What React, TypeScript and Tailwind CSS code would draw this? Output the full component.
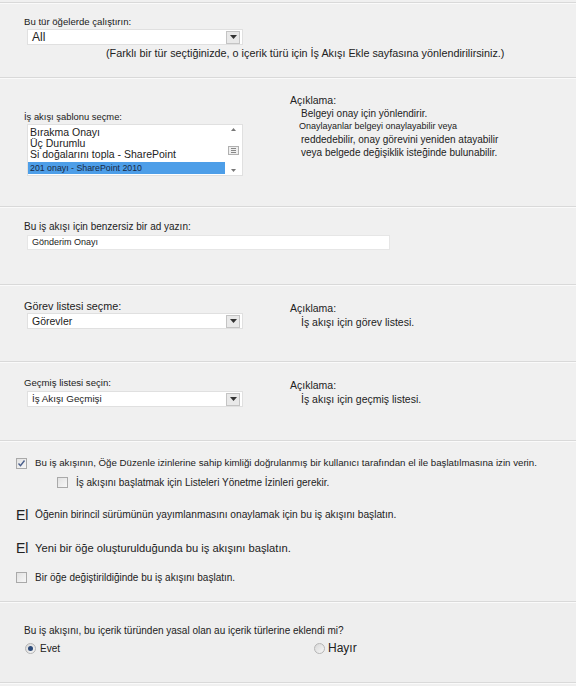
import React from "react";

const font = { fontFamily: '"Liberation Sans", Arial, sans-serif' };

function Separator() {
  return (
    <div>
      <div className="h-px bg-[#d9d9d9]" />
      <div className="h-px bg-[#fafafa]" />
    </div>
  );
}

function Arrow() {
  return (
    <div className="ml-auto mr-[2px] w-[14px] h-[13px] bg-[#e9e9e9] border border-[#c4c4c4] flex items-center justify-center">
      <svg width="7" height="4" viewBox="0 0 7 4">
        <path d="M0 0h7L3.5 4z" fill="#333" />
      </svg>
    </div>
  );
}

function Select({ value, size = "text-[12px]" }: { value: string; size?: string }) {
  return (
    <div className="w-[216px] h-[16px] bg-white border border-[#e0e0e0] flex items-center">
      <span className={`pl-[4px] ${size} leading-[14px] text-[#222]`}>{value}</span>
      <Arrow />
    </div>
  );
}

function Checkbox({ checked = false }: { checked?: boolean }) {
  return (
    <div className="w-[11px] h-[11px] border border-[#a9a9a9] bg-gradient-to-br from-[#e2e2e2] to-[#f7f7f7] flex items-center justify-center shrink-0">
      {checked && (
        <svg width="9" height="9" viewBox="0 0 9 9">
          <path d="M1.5 4.5l2 2.2L7.5 1.5" stroke="#4a5f8c" strokeWidth="1.4" fill="none" />
        </svg>
      )}
    </div>
  );
}

function Radio({ checked = false }: { checked?: boolean }) {
  return (
    <div className="w-[11px] h-[11px] rounded-full border border-[#b5b5b5] bg-gradient-to-br from-[#d8d8d8] to-[#f7f7f7] flex items-center justify-center shrink-0">
      {checked && <div className="w-[5px] h-[5px] rounded-full bg-[#2c4a7a]" />}
    </div>
  );
}

export default function App() {
  return (
    <div className="w-[576px] h-[686px] bg-[#f0f0f0] text-[#222] overflow-hidden" style={font}>
      <div className="h-[2px]" />
      <Separator />

      {/* content type */}
      <div className="h-[73px] pt-[12px] pl-[24px]">
        <div className="text-[9.6px] leading-[12px]">Bu tür öğelerde çalıştırın:</div>
        <div className="pl-[3px] mt-px">
          <Select value="All" />
        </div>
        <div className="pl-[82px] mt-[2px] text-[10.8px] leading-[12px] whitespace-nowrap">
          (Farklı bir tür seçtiğinizde, o içerik türü için İş Akışı Ekle sayfasına yönlendirilirsiniz.)
        </div>
      </div>
      <Separator />

      {/* template */}
      <div className="h-[127px] flex pl-[24px]">
        <div className="w-[266px] pt-[32px]">
          <div className="text-[9.4px] leading-[12px]">İş akışı şablonu seçme:</div>
          <div className="ml-[3px] mt-px w-[216px] h-[52px] bg-white border border-[#e0e0e0] flex">
            <div className="flex-1 pt-[2px] pl-[2px]">
              <div className="text-[10.5px] leading-[11px] h-[11px]">Bırakma Onayı</div>
              <div className="text-[10.5px] leading-[11px] h-[11px]">Üç Durumlu</div>
              <div className="text-[10.5px] leading-[11px] h-[11px]">Si doğalarını topla - SharePoint</div>
              <div className="-ml-[2px] mt-[2px] h-[12px] bg-[#4d9ee8] text-[8.8px] leading-[12px] pl-[2px] text-[#1a2a44]">
                201 onayı - SharePoint 2010
              </div>
            </div>
            <div className="w-[17px] flex flex-col items-center justify-between py-[3px]">
              <svg width="5" height="3" viewBox="0 0 5 3"><path d="M0 3h5L2.5 0z" fill="#777" /></svg>
              <div className="w-[11px] h-[9px] border border-[#b0b0b0] bg-[#efefef] flex flex-col justify-center items-center gap-px">
                <div className="w-[5px] h-px bg-[#888]" />
                <div className="w-[5px] h-px bg-[#888]" />
                <div className="w-[5px] h-px bg-[#888]" />
              </div>
              <svg width="5" height="3" viewBox="0 0 5 3"><path d="M0 0h5L2.5 3z" fill="#777" /></svg>
            </div>
          </div>
        </div>
        <div className="pt-[15px] text-[10px] leading-[13px]">
          <div className="text-[10.5px]">Açıklama:</div>
          <div className="pl-[11px]">
            <div>Belgeyi onay için yönlendirir.</div>
            <div className="-ml-[2px] text-[9px]">Onaylayanlar belgeyi onaylayabilir veya</div>
            <div>reddedebilir, onay görevini yeniden atayabilir</div>
            <div>veya belgede değişiklik isteğinde bulunabilir.</div>
          </div>
        </div>
      </div>
      <Separator />

      {/* name */}
      <div className="h-[76px] pt-[13px] pl-[24px]">
        <div className="text-[10px] leading-[12px]">Bu iş akışı için benzersiz bir ad yazın:</div>
        <div className="ml-[3px] mt-[2px] w-[363px] h-[15px] bg-white border border-[#e6e6e6] flex items-center">
          <span className="pl-[4px] text-[9px]">Gönderim Onayı</span>
        </div>
      </div>
      <Separator />

      {/* task list */}
      <div className="h-[75px] flex pl-[24px]">
        <div className="w-[266px] pt-[13px]">
          <div className="text-[10.8px] leading-[14px]">Görev listesi seçme:</div>
          <div className="pl-[3px]">
            <Select value="Görevler" size="text-[10.5px]" />
          </div>
        </div>
        <div className="pt-[15px] text-[10.5px] leading-[14px]">
          <div>Açıklama:</div>
          <div className="pl-[11px]">İş akışı için görev listesi.</div>
        </div>
      </div>
      <Separator />

      {/* history list */}
      <div className="h-[77px] flex pl-[24px]">
        <div className="w-[266px] pt-[14px]">
          <div className="text-[9.6px] leading-[12px]">Geçmiş listesi seçin:</div>
          <div className="pl-[3px] mt-[2px]">
            <Select value="İş Akışı Geçmişi" size="text-[9.8px]" />
          </div>
        </div>
        <div className="pt-[15px] text-[10.5px] leading-[14px]">
          <div>Açıklama:</div>
          <div className="pl-[11px]">İş akışı için geçmiş listesi.</div>
        </div>
      </div>
      <Separator />

      {/* start options */}
      <div className="h-[159px] pl-[16px] pt-[15px]">
        <div className="flex items-center gap-[8px] h-[12px]">
          <Checkbox checked />
          <span className="text-[9.7px] whitespace-nowrap">
            Bu iş akışının, Öğe Düzenle izinlerine sahip kimliği doğrulanmış bir kullanıcı tarafından el ile başlatılmasına izin verin.
          </span>
        </div>
        <div className="flex items-center gap-[8px] h-[12px] mt-[7px] pl-[41px]">
          <Checkbox />
          <span className="text-[10px]">İş akışını başlatmak için Listeleri Yönetme İzinleri gerekir.</span>
        </div>
        <div className="flex items-center h-[16px] mt-[19px]">
          <span className="w-[19px] text-[14px] leading-[16px]">El</span>
          <span className="text-[10.2px]">Öğenin birincil sürümünün yayımlanmasını onaylamak için bu iş akışını başlatın.</span>
        </div>
        <div className="flex items-center h-[16px] mt-[17px]">
          <span className="w-[19px] text-[14px] leading-[16px]">El</span>
          <span className="text-[11.2px]">Yeni bir öğe oluşturulduğunda bu iş akışını başlatın.</span>
        </div>
        <div className="flex items-center gap-[8px] h-[12px] mt-[15px]">
          <Checkbox />
          <span className="text-[10px]">Bir öğe değiştirildiğinde bu iş akışını başlatın.</span>
        </div>
      </div>
      <Separator />

      {/* content types */}
      <div className="h-[79px] pl-[24px] pt-[22px] bg-[#eeeeee]">
        <div className="text-[10px] leading-[12px]">
          Bu iş akışını, bu içerik türünden yasal olan au içerik türlerine eklendi mi?
        </div>
        <div className="flex items-center h-[14px] mt-[4px] pl-px">
          <div className="flex items-center gap-[4px] w-[289px]">
            <Radio checked />
            <span className="text-[10px]">Evet</span>
          </div>
          <div className="flex items-center gap-[3px]">
            <Radio />
            <span className="text-[12px]">Hayır</span>
          </div>
        </div>
      </div>
      <Separator />
    </div>
  );
}
